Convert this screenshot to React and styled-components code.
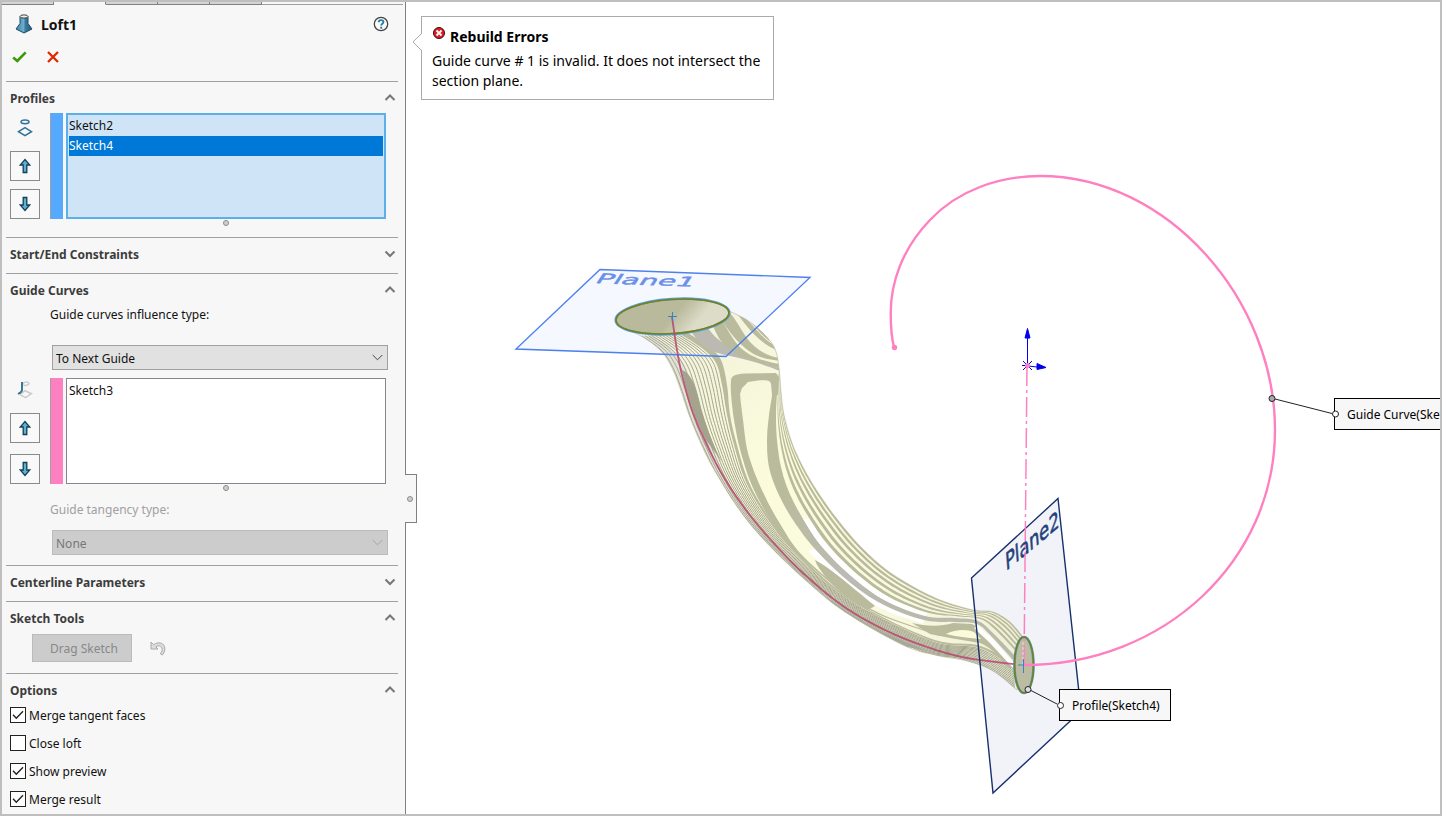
//Loft property manager next to the graphics area with the preview of the loft

import { useId, useState } from "react";
import styled, { createGlobalStyle } from "styled-components";

const App = () => {
    return (
        <Frame>
            <GlobalStyle />
            <Panel>
                <TabStrip>
                    <Tab />
                    <Tab $active />
                    <Tab />
                    <Tab />
                    <Tab />
                    <TabFiller />
                </TabStrip>
                <PanelHead>
                    <LoftIcon />
                    <h1>Loft1</h1>
                    <IconButton aria-label="Help"><HelpIcon /></IconButton>
                </PanelHead>
                <Confirm>
                    <IconButton aria-label="OK"><OkIcon /></IconButton>
                    <IconButton aria-label="Cancel"><CancelIcon /></IconButton>
                </Confirm>

                <Section title="Profiles" open>
                    <SelectionList
                        icon={<ProfileIcon />}
                        color="#55aaff"
                        items={["Sketch2", "Sketch4"]}
                        selected="Sketch4"
                        label="Profiles"
                        active
                        gap={8}
                    />
                </Section>
                <Section title="Start/End Constraints" />
                <Section title="Guide Curves" open>
                    <DropDown label="Guide curves influence type:" options={["To Next Guide", "To Next Sharp", "To Next Edge", "Global"]} space={20} />
                    <Spacer />
                    <SelectionList
                        icon={<GuideIcon />}
                        color="#ff80c0"
                        items={["Sketch3"]}
                        label="Guide Curves"
                        gap={11}
                    />
                    <DropDown label="Guide tangency type:" options={["None"]} space={10} disabled />
                </Section>
                <Section title="Centerline Parameters" />
                <Section title="Sketch Tools" open>
                    <Tools>
                        <DragButton disabled>Drag Sketch</DragButton>
                        <IconButton disabled aria-label="Undo sketch drag"><UndoIcon /></IconButton>
                    </Tools>
                </Section>
                <Section title="Options" open>
                    <Options>
                        <CheckOption label="Merge tangent faces" checked />
                        <CheckOption label="Close loft" />
                        <CheckOption label="Show preview" checked />
                        <CheckOption label="Merge result" checked />
                    </Options>
                </Section>
                <Splitter><Grip /></Splitter>
            </Panel>
            <Canvas>
                <Preview />
                <Balloon role="alert">
                    <BalloonTail />
                    <BalloonTitle><ErrorIcon /><h2>Rebuild Errors</h2></BalloonTitle>
                    <p>Guide curve # 1 is invalid. It does not intersect the section plane.</p>
                </Balloon>
                <Callout $x={928} $y={396}>Guide Curve(Sketch3)</Callout>
                <Callout $x={653} $y={687}>Profile(Sketch4)</Callout>
                <CalloutPins />
            </Canvas>
        </Frame>
    );
};

const Section = ({ title, open: initial = false, children }) => {
    const [open, setOpen] = useState(initial);

    return (
        <Group $open={open && Boolean(children)}>
            <GroupHead aria-expanded={open} onClick={() => setOpen(!open)}>
                <span>{title}</span>
                <svg width="12" height="8" viewBox="0 0 12 8" fill="none" stroke="#777" strokeWidth="2">
                    <path d={open ? "M1.500 6 6 1.500 10.500 6" : "M1.500 1.500 6 6 10.500 1.500"} />
                </svg>
            </GroupHead>
            {open && children}
        </Group>
    );
};

const SelectionList = ({ icon, color, items, selected, label, active, gap }) => {
    return (
        <>
            <ListRow>
                <ListTools $gap={gap}>
                    <ListIcon>{icon}</ListIcon>
                    <MoveButton aria-label={`Move up in ${label}`}><ArrowIcon /></MoveButton>
                    <MoveButton aria-label={`Move down in ${label}`}><ArrowIcon down /></MoveButton>
                </ListTools>
                <ColorBar $color={color} />
                <ListBox role="listbox" aria-label={label} $active={active}>
                    {items.map((item) => (
                        <Item key={item} role="option" aria-selected={item === selected} $selected={item === selected}>{item}</Item>
                    ))}
                </ListBox>
            </ListRow>
            <GripRow><Grip /></GripRow>
        </>
    );
};

const DropDown = ({ label, options, space, disabled }) => {
    const id = useId();

    return (
        <Field $space={space} $disabled={disabled}>
            <label htmlFor={id}>{label}</label>
            <SelectWrap>
                <Select id={id} disabled={disabled}>
                    {options.map((option) => <option key={option}>{option}</option>)}
                </Select>
                <svg width="11" height="7" viewBox="0 0 11 7" fill="none" stroke={disabled ? "#a4a4a4" : "#444"}>
                    <path d="M.7 1 5.500 5.800 10.300 1" />
                </svg>
            </SelectWrap>
        </Field>
    );
};

const CheckOption = ({ label, checked = false }) => {
    const [on, setOn] = useState(checked);

    return (
        <CheckLabel>
            <CheckWrap>
                <CheckBox type="checkbox" checked={on} onChange={() => setOn(!on)} />
                {on && (
                    <svg width="12" height="10" viewBox="0 0 12 10" fill="none" stroke="#222" strokeWidth="1.400">
                        <path d="M1 4.800 4.300 8.300 11 1.300" />
                    </svg>
                )}
            </CheckWrap>
            {label}
        </CheckLabel>
    );
};

//icons

const LoftIcon = () => (
    <svg width="18" height="20" viewBox="0 0 18 20">
        <defs>
            <linearGradient id="loft" x1="0" x2="1">
                <stop offset="0" stopColor="#3f82a6" />
                <stop offset=".5" stopColor="#6fb0d0" />
                <stop offset=".55" stopColor="#3f7f9f" />
                <stop offset="1" stopColor="#245a78" />
            </linearGradient>
        </defs>
        <path d="M5 2.500v7L1 15l8 4 8-4-4-5.500v-7z" fill="url(#loft)" stroke="#1e4d66" />
        <ellipse cx="9" cy="2.500" rx="4" ry="1.600" fill="#eee" stroke="#444" />
    </svg>
);

const HelpIcon = () => (
    <svg width="16" height="16" viewBox="0 0 16 16" fill="none">
        <circle cx="8" cy="8" r="6.700" fill="#fbfbfb" stroke="#444" strokeWidth="1.300" />
        <path d="M5.700 6.200C5.700 3.500 10.400 3.500 10.400 6c0 1.700-2.200 1.700-2.200 3.500" stroke="#2b7ba8" strokeWidth="1.900" />
        <path d="M8.200 10.700v2" stroke="#2b7ba8" strokeWidth="2" />
    </svg>
);

const OkIcon = () => (
    <svg width="15" height="12" viewBox="0 0 15 12" fill="none" stroke="#3a9a08" strokeWidth="2.600">
        <path d="M1.200 6.500 5.300 10 13.700 1.300" />
    </svg>
);

const CancelIcon = () => (
    <svg width="12" height="12" viewBox="0 0 12 12" fill="none" stroke="#e02800" strokeWidth="2.300">
        <path d="M1 1l10 10M11 1 1 11" />
    </svg>
);

const ProfileIcon = () => (
    <svg width="16" height="18" viewBox="0 0 16 18" fill="none" stroke="#2f7396" strokeWidth="1.500">
        <ellipse cx="8" cy="2.800" rx="4" ry="1.900" />
        <path d="M1.500 12.700 8 8.700l6.500 4L8 16.700z" />
    </svg>
);

const GuideIcon = () => (
    <svg width="16" height="18" viewBox="0 0 16 18" fill="none">
        <path d="M6 3.500C6 .5 12 .5 12 2.500S7.500 4.500 6.500 4.200" stroke="#ccc" strokeWidth="1.500" />
        <path d="M3 13.500 8 9.700l6.500 3-6 4-5.500-3" stroke="#ccc" strokeWidth="1.500" />
        <path d="M5 1v8c0 2-2 3-4 4" stroke="#2f7396" strokeWidth="1.900" />
    </svg>
);

const ArrowIcon = ({ down }) => (
    <svg width="12" height="16" viewBox="0 0 12 16">
        <path
            d={down ? "M4.200 1.500h3.600V9h3L6 14.500 1.200 9h3z" : "M4.200 14.500h3.600V7h3L6 1.500 1.200 7h3z"}
            fill="#5fb0d2"
            stroke="#123f57"
            strokeWidth="1.300"
        />
    </svg>
);

const UndoIcon = () => (
    <svg width="16" height="15" viewBox="0 0 16 15">
        <path d="M1 1v7h7L5.800 5.800C9 3.500 13 5.500 12 10l-1.500 3 1.800 1C17 9 15 1.500 8.500 1.800 6.500 2 5 2.600 3.700 3.700z" fill="#ddd" stroke="#aaa" />
    </svg>
);

const ErrorIcon = () => (
    <svg width="12" height="12" viewBox="0 0 12 12">
        <circle cx="6" cy="6" r="5.500" fill="#e01c24" stroke="#3a0a0c" />
        <path d="M3.500 3.500l5 5M8.500 3.500l-5 5" stroke="#fff" strokeWidth="1.800" />
    </svg>
);

const BalloonTail = () => (
    <TailSvg width="10" height="18" viewBox="0 0 10 18">
        <path d="M10 1v16H9.500L1 9l8.500-8z" fill="#fff" />
        <path d="M9.500.5 1 9l8.500 8.500" fill="none" stroke="#aaa" />
    </TailSvg>
);

//catmull-rom between four values
const spline = (a, b, c, d, u) =>
    0.5 * (2 * b + (c - a) * u + (2 * a - 5 * b + 4 * c - d) * u * u + (3 * b - a - 3 * c + d) * u * u * u);

const sample = (rows, s, col) => {
    const last = rows.length - 1;
    const i = Math.min(Math.floor(s), last - 1);
    const at = (n) => rows[Math.max(0, Math.min(last, n))][col];
    return spline(at(i - 1), at(i), at(i + 1), at(i + 2), s - i);
};

const smooth = (points) => {
    const out = [];
    for (let i = 0; i < points.length - 1; i++) {
        for (let k = 0; k < 8; k++) {
            out.push([sample(points, i + k / 8, 0), sample(points, i + k / 8, 1)]);
        }
    }
    out.push(points[points.length - 1]);
    return out;
};

const toPath = (points) => "M" + points.map(([x, y]) => `${x.toFixed(1)} ${y.toFixed(1)}`).join("L");

//closed shape between two edges
const ribbon = (a, b) => toPath([...smooth(a), ...smooth(b).reverse()]) + "Z";

//edge that lies between two others, t from 0 to 1
const mix = (a, b, t) => a.map(([x, y], i) => [x + (b[i][0] - x) * t, y + (b[i][1] - y) * t]);

const LEFT = [
    [618, 326], [641, 336], [660, 350], [671, 366], [680, 388], [688, 412], [698, 437], [712, 466], [738, 508],
    [764, 540], [803, 578], [845, 612], [903, 645], [935, 655], [967, 661], [993, 671], [1017, 690],
];

const RIGHT = [
    [729, 311], [747, 320], [764, 334], [775, 349], [779, 368], [781, 392], [784, 415], [792, 443], [804, 469],
    [819, 494], [837, 519], [859, 545], [884, 568], [910, 585], [940, 600], [973, 610], [993, 612], [1010, 622], [1023, 637],
];

const BODY = ribbon(LEFT, RIGHT);

//broad stripe right of the closed loop and its two edges
const BROAD_OUTER = [
    [778, 376], [777, 393], [776, 415], [777, 440], [781, 467], [789, 492], [803, 519], [822, 547],
    [851, 576], [884, 600], [925, 616], [955, 618], [978, 621], [994, 634], [1015, 656],
];
const BROAD_INNER = [
    [772, 382], [772, 395], [769, 415], [767, 440], [769, 467], [778, 493], [793, 520], [815, 549],
    [847, 580], [882, 604], [924, 620], [955, 622], [977, 624], [992, 637], [1013, 660],
];
const BACK = [
    [780, 368], [781, 392], [784, 415], [792, 443], [804, 469], [819, 494], [837, 519], [859, 545],
    [884, 568], [910, 585], [940, 600], [973, 610], [993, 612], [1010, 622], [1023, 637],
];

const OUTER = [0.2, 0.41, 0.61, 0.78, 0.93].map((t, i) =>
    ribbon(mix(BROAD_OUTER, BACK, t), mix(BROAD_OUTER, BACK, t + 0.11 - i * 0.008))
);

const LOOP_LEFT = [
    [731, 380], [731, 393], [734, 420], [741, 453], [753, 488], [773, 524], [799, 555], [840, 590], [880, 615], [940, 636],
];
const LOOP_RIGHT = [
    [741, 388], [740, 393], [743, 420], [748, 453], [761, 488], [779, 522], [801, 554], [841, 589], [881, 614], [940, 635],
];

const INNER = [
    [680, 334], [703, 349], [716, 363], [722, 385], [727, 415], [734, 445], [745, 480], [764, 514],
    [790, 548], [830, 586], [870, 612], [935, 642], [980, 648], [1014, 668],
];
const INNER_EDGE = [
    [688, 333], [709, 347], [721, 360], [727, 385], [730, 415], [737, 445], [748, 480], [766, 513],
    [792, 547], [832, 585], [871, 611], [935, 640], [981, 646], [1014, 665],
];
const FRONT = [
    [641, 336], [660, 350], [671, 366], [680, 388], [690, 418], [703, 448], [718, 477], [740, 511],
    [766, 542], [803, 578], [845, 612], [920, 651], [967, 661], [1015, 689],
];

const FINE = Array.from({ length: 12 }, (_, i) => (i + 0.3) / 12);

//stripes that leave the rim and turn towards the right silhouette
const RIM = [
    "M692 333C702 347 710 352 730 356S768 366 780 371L780 368C764 364 752 359 740 353S716 340 708 328Z",
    "M713 326C720 344 730 353 745 358S770 366 780 368L780 364C764 362 750 356 742 349S728 330 722 321Z",
    "M722 321C732 336 742 347 752 353S770 359 780 361L780 358C768 357 758 350 751 343S738 322 730 313Z",
    "M736 313C745 322 755 342 779 351L778 347C762 340 754 325 743 316Z",
    "M749 320C758 330 766 341 777 345L776 341C769 338 764 332 757 325Z",
];

const SPINE = [
    [672, 317], [677, 350], [682, 375], [692, 410], [706, 443], [722, 474], [743, 506], [770, 539],
    [803, 573], [843, 606], [885, 630], [927, 647], [967, 658], [1022, 665],
];

const Preview = () => (
    <PreviewSvg width="1034" height="812" viewBox="406 2 1034 812" role="img" aria-label="Loft preview">
        <defs>
            <clipPath id="body"><path d={BODY} /></clipPath>
            <linearGradient id="shade" gradientUnits="userSpaceOnUse" x1="640" y1="340" x2="1020" y2="650">
                <stop offset="0" stopColor="#f2f2e0" />
                <stop offset=".2" stopColor="#f6f6dc" />
                <stop offset=".4" stopColor="#fcfcdc" />
                <stop offset=".75" stopColor="#f9f9e0" />
                <stop offset="1" stopColor="#f0f0d8" />
            </linearGradient>
            <linearGradient id="cap" x1="0" y1="0" x2="1" y2=".3">
                <stop offset=".6" stopColor="#b9b99c" />
                <stop offset=".85" stopColor="#dcdcc8" />
            </linearGradient>
            <linearGradient id="broad" gradientUnits="userSpaceOnUse" x1="780" y1="500" x2="900" y2="610">
                <stop offset="0" stopColor="#babb9d" />
                <stop offset=".6" stopColor="#bcbab4" />
                <stop offset="1" stopColor="#b9b9ac" />
            </linearGradient>
        </defs>

        <path d="M600 269.500 810 277.500 726 356.500 516 349z" fill="#f5f8fe" />
        <path d="M971.500 578 1058 498.500 1081 711 993 793z" fill="#f1f3f8" />

        <path d={BODY} fill="url(#shade)" />
        <g clipPath="url(#body)" fill="#babb9d">
            <path d={ribbon(FRONT, mix(FRONT, INNER, 0.3))} fill="#e2e2d6" />
            <path d="M682 370C689 372 695 383 698 397S708 434 722 462L706 440C696 420 688 400 682 370Z" fill="#a3a38e" />
            <g fill="none" stroke="#a4a58e">
                {FINE.map((t) => <path key={t} d={toPath(smooth(mix(FRONT, INNER, t)))} />)}
            </g>
            <path d="M826 597 850 614 875 629 903 641 925 650 900 646 872 633 845 616Z" fill="#a8a898" />
            <path d={ribbon(INNER, INNER_EDGE)} />

            <path d={ribbon(LOOP_LEFT, LOOP_RIGHT)} />
            <path d="M731 394V381C731 376 735 374 745 373.500L776 373 779 377 778 395H772L771 384C770 380 767 380 758 380.500L748 382 742 388 740 394Z" />

            <path d={ribbon(mix(BROAD_INNER, BROAD_OUTER, -1).slice(7, 11), BROAD_OUTER.slice(7, 11))} fill="#fff" />
            <path d={ribbon(BROAD_OUTER.slice(6, 11), mix(BROAD_OUTER, BACK, 0.19).slice(6, 11))} fill="#fff" />
            {OUTER.map((d, i) => <path key={i} d={d} />)}
            <path d={ribbon(BROAD_INNER, BROAD_OUTER)} fill="url(#broad)" />

            <path d="M815 560C828 567 840 577 852 587S868 600 875 606L868 610C853 602 835 589 828 580S817 566 815 560Z" />
            <path d="M912 623C925 626 940 627 953 623L972 624C984 630 1002 648 1015 668L1008 668C1000 657 992 648 980 643L950 638 930 634Z" />
            <path d="M946 634C955 629 968 629 974 632L981 639C970 638 958 637 946 634Z" fill="#fbfbdc" />
            <path d="M977 625 992 638 1014 663 1013 668 990 643 974 628Z" fill="#fff" />

            {RIM.map((d, i) => <path key={d} d={d} fill={i === 0 ? "#babab2" : "#babb9d"} />)}
        </g>
        <path d={BODY} fill="none" stroke="#b4b598" strokeWidth=".8" opacity=".8" />

        <g transform="rotate(-4 672.500 316.500)">
            <ellipse cx="672.500" cy="316.500" rx="57" ry="17.500" fill="url(#cap)" stroke="#4ba3e0" strokeWidth="2.400" />
            <ellipse cx="672.500" cy="316.500" rx="56.500" ry="17" fill="none" stroke="#7d7d12" strokeWidth="1.600" />
        </g>
        <path d="M600 269.500 810 277.500 726 356.500 516 349z" fill="none" stroke="#4f80ee" strokeWidth="1.400" />
        <PlaneName transform="matrix(1.320 .05 -.4 .6 594 283)" fill="#6a8fe8" stroke="#6a8fe8">Plane1</PlaneName>

        <path d={toPath(smooth(SPINE))} fill="none" stroke="#b8436e" strokeWidth="1.800" opacity=".85" />
        <path d="M668 316.500h9M672.500 312v9" stroke="#2f86c8" />

        <ellipse cx="1024" cy="665" rx="9.500" ry="28" fill="#bcbca2" stroke="#4ba3e0" strokeWidth="2.600" />
        <ellipse cx="1024" cy="665" rx="9.500" ry="28" fill="none" stroke="#7d7d12" strokeWidth="1.600" />
        <path d="M971.500 578 1058 498.500 1081 711 993 793z" fill="none" stroke="#17306e" strokeWidth="1.400" />
        <PlaneName transform="matrix(.72 -.6 .08 1.050 1006 571)" fill="#24407c" stroke="#24407c">Plane2</PlaneName>

        <path d="M1027 366 1024 665" stroke="#ff80c0" strokeWidth="1.500" strokeDasharray="20 4 3 4" />
        <path d="M1023 665h12M1023 642v23" stroke="#ffd0e6" strokeDasharray="3 2" />
        <path d="M1018 665h10M1023.500 659v14" stroke="#2f86c8" />
        <path
            d="M894 347C891 336 890.700 325 890.700 313 890.700 283 902 249 930 220 958 190 1000 176 1040 176 1168 176 1275 300 1275 430S1165 665 1024 665"
            fill="none"
            stroke="#ff80c0"
            strokeWidth="2.400"
        />
        <circle cx="894.500" cy="347.500" r="2.700" fill="#ff80c0" />

        <g stroke="#0000f0" fill="#0000f0">
            <path d="M1027.500 365V337M1028 366l9 1M1023 361l9 9M1032 361l-9 9M1022 365.500h4" fill="none" />
            <path d="M1027.500 328.500 1030 338h-5zM1046 367.500 1037 363.500v6z" />
        </g>
        <circle cx="1027.500" cy="365.500" r="2.500" fill="#ff80c0" />
    </PreviewSvg>
);

const CalloutPins = () => (
    <PinSvg width="1034" height="812" viewBox="406 2 1034 812" fill="none" stroke="#222">
        <path d="M1275 399 1332 413.500M1031 690.500 1057 704" />
        <circle cx="1272" cy="398.500" r="3" fill="#aaa" />
        <circle cx="1335.500" cy="414" r="3" fill="#fff" />
        <circle cx="1028" cy="689.500" r="3" fill="#ddd" />
        <circle cx="1060.500" cy="705.500" r="3" fill="#fff" />
    </PinSvg>
);

const GlobalStyle = createGlobalStyle`
    * {
        box-sizing: border-box;
    }

    body {
        margin: 0;
    }

    body, button, select, input {
        font-family: "Noto Sans", "Open Sans", sans-serif;
        font-size: 12px;
        color: #111;
    }

    h1, h2, p, ul {
        margin: 0;
        padding: 0;
    }
`;

const Frame = styled.main`
    display: flex;
    height: 100vh;
    border: 2px solid #bfbfbf;
    overflow: hidden;
    background: #fff;
`;

const Panel = styled.aside`
    position: relative;
    z-index: 1;
    flex: none;
    width: 404px;
    border-right: 1px solid #808080;
    background: #f7f7f7;
`;

const TabStrip = styled.div`
    display: flex;
    height: 3px;
    margin-right: 2px;
`;

const Tab = styled.div`
    width: 52px;
    border-bottom: 1px solid ${({ $active }) => ($active ? "#f7f7f7" : "#808080")};
    border-right: 1px solid #808080;
    background: ${({ $active }) => ($active ? "#f7f7f7" : "#d4d4d4")};
`;

const TabFiller = styled.div`
    flex: 1;
    border-bottom: 1px solid #a0a0a0;
`;

const PanelHead = styled.header`
    display: flex;
    align-items: center;
    gap: 8px;
    height: 38px;
    padding: 0 16px 0 13px;

    h1 {
        flex: 1;
        padding-top: 2px;
        font-size: 14px;
        line-height: 20px;
    }
`;

const Confirm = styled.div`
    display: flex;
    align-items: center;
    gap: 20px;
    height: 38px;
    padding: 0 10px 10px;
`;

const IconButton = styled.button`
    display: flex;
    padding: 0;
    border: 0;
    background: none;
`;

const Group = styled.section`
    margin: 0 7px 0 4px;
    padding-bottom: ${({ $open }) => ($open ? "10px" : "4px")};
    border-top: 1px solid #a0a0a0;
`;

const GroupHead = styled.button`
    display: flex;
    align-items: center;
    justify-content: space-between;
    width: 100%;
    height: 31px;
    padding: 0 2px 0 4px;
    border: 0;
    background: none;
    color: #3c3c3c;
    font-weight: bold;

    span {
        padding-top: 2px;
    }
`;

const ListRow = styled.div`
    display: flex;
    height: 106px;
    padding: 0 12px 0 4px;
`;

const ListTools = styled.div`
    display: flex;
    flex-direction: column;
    gap: ${({ $gap }) => $gap}px;
    width: 30px;
    margin-right: 10px;
`;

const ListIcon = styled.div`
    display: flex;
    flex: 1;
    align-items: center;
    justify-content: center;
`;

const MoveButton = styled.button`
    display: flex;
    align-items: center;
    justify-content: center;
    width: 30px;
    height: 30px;
    padding: 0;
    border: 1px solid #8a8a8a;
    background: #f9f9f9;
`;

const ColorBar = styled.div`
    width: 13px;
    margin-right: 3px;
    border-left: 1px solid #a0a0a0;
    background: ${({ $color }) => $color};
`;

const ListBox = styled.ul`
    flex: 1;
    padding: ${({ $active }) => ($active ? "1px" : "2px")};
    border: ${({ $active }) => ($active ? "2px solid #5cb0e8" : "1px solid #828790")};
    background: ${({ $active }) => ($active ? "#cfe4f7" : "#fff")};
    list-style: none;
`;

const Item = styled.li`
    height: 20px;
    line-height: 20px;
    background: ${({ $selected }) => ($selected ? "#0078d7" : "none")};
    color: ${({ $selected }) => ($selected ? "#fff" : "#111")};
`;

const Grip = styled.span`
    width: 6px;
    height: 6px;
    border: 1px solid #8c8c8c;
    border-radius: 50%;
    background: #d0d0d0;
`;

const GripRow = styled.div`
    display: flex;
    align-items: center;
    justify-content: center;
    height: 8px;
    padding-left: 48px;
`;

const Spacer = styled.div`
    height: 8px;
`;

const Field = styled.div`
    display: flex;
    flex-direction: column;
    gap: ${({ $space }) => $space}px;
    padding: ${({ $disabled }) => ($disabled ? "8px" : "0")} 10px 0 44px;

    label {
        line-height: 20px;
        color: ${({ $disabled }) => ($disabled ? "#a0a0a0" : "#111")};
    }
`;

const SelectWrap = styled.div`
    display: grid;
    align-items: center;
    margin-left: 2px;

    > * {
        grid-area: 1 / 1;
    }

    svg {
        justify-self: end;
        margin-right: 5px;
        pointer-events: none;
    }
`;

const Select = styled.select`
    appearance: none;
    width: 100%;
    height: 25px;
    padding: 2px 3px 0;
    border: 1px solid #a0a0a0;
    border-radius: 0;
    background: #e1e1e1;

    &:disabled {
        border-color: #bbb;
        background: #ccc;
        color: #777;
        opacity: 1;
    }
`;

const Tools = styled.div`
    display: flex;
    align-items: center;
    gap: 18px;
    padding: 1px 0 1px 26px;
`;

const DragButton = styled.button`
    width: 100px;
    height: 28px;
    padding: 0 0 0 4px;
    border: 1px solid #bbb;
    background: #ccc;

    &:disabled {
        color: #888;
    }
`;

const Options = styled.div`
    display: flex;
    flex-direction: column;
    gap: 8px;
    padding-left: 4px;
`;

const CheckLabel = styled.label`
    display: flex;
    align-items: center;
    gap: 3px;
    height: 20px;
`;

const CheckWrap = styled.span`
    display: grid;
    place-items: center;

    > * {
        grid-area: 1 / 1;
    }

    svg {
        pointer-events: none;
    }
`;

const CheckBox = styled.input`
    appearance: none;
    width: 16px;
    height: 16px;
    margin: 0;
    border: 1px solid #222;
    background: #fff;
`;

//handle that hangs over the edge of the graphics area
const Splitter = styled.div`
    display: flex;
    align-items: center;
    justify-content: center;
    position: absolute;
    top: 472px;
    right: -12px;
    width: 12px;
    height: 49px;
    padding-right: 2px;
    border: 1px solid #808080;
    border-left: 0;
    background: #f7f7f7;
`;

const Canvas = styled.div`
    position: relative;
    flex: 1;
    min-width: 0;
    overflow: hidden;
    background: #fff;
`;

const PreviewSvg = styled.svg`
    display: block;
`;

const PinSvg = styled.svg`
    position: absolute;
    top: 0;
    left: 0;
    pointer-events: none;
`;

const PlaneName = styled.text`
    font-family: "DejaVu Sans", sans-serif;
    font-size: 22px;
    stroke-width: 0.6;
`;

const Balloon = styled.div`
    position: absolute;
    top: 14px;
    left: 15px;
    max-width: 353px;
    padding: 9px 10px 8px;
    border: 1px solid #aaa;
    background: #fff;
    color: #000;
    font-size: 14px;
    line-height: 20px;
`;

const TailSvg = styled.svg`
    position: absolute;
    top: 16px;
    left: -10px;
`;

const BalloonTitle = styled.div`
    display: flex;
    gap: 5px;
    height: 25px;

    svg {
        margin: 1px 0 0 1px;
    }

    h2 {
        font-size: 14px;
        line-height: 22px;
    }
`;

const Callout = styled.div`
    position: absolute;
    top: ${({ $y }) => $y}px;
    left: ${({ $x }) => $x}px;
    padding: 2px 10px 0 12px;
    border: 1px solid #000;
    background: #f7f7f7;
    color: #000;
    line-height: 28px;
    white-space: nowrap;
`;

export default App;
